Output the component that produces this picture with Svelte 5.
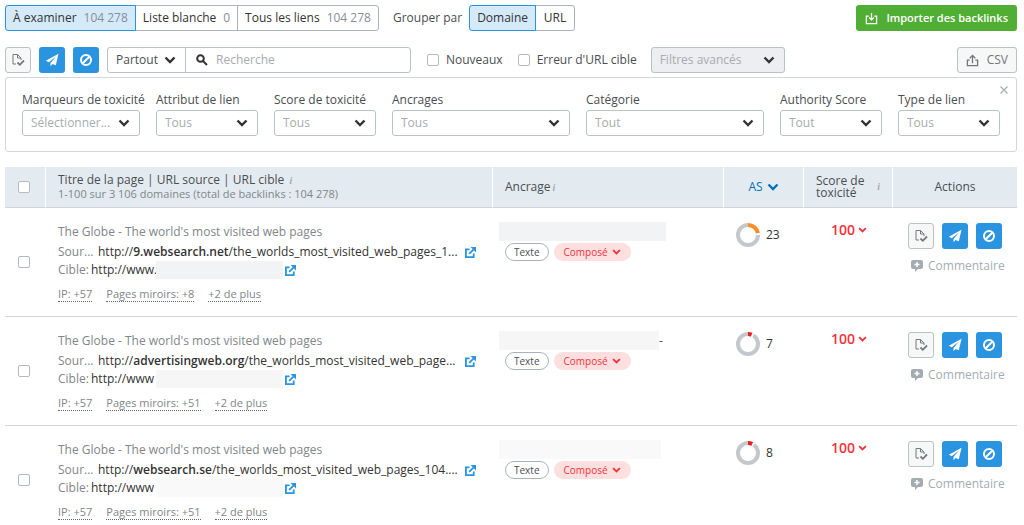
<script lang="ts">
  type Filter = { id: string; label: string; value: string };

  type Backlink = {
    id: number;
    title: string;
    domain: string;
    path: string;
    target: string;
    mirrors: number;
    authority: number;
    color: string;
    toxicity: number;
    mask: { color: string; width: number };
    rest?: string;
  };

  const filters: Filter[] = [
    { id: "markers", label: "Marqueurs de toxicité", value: "Sélectionner..." },
    { id: "attribute", label: "Attribut de lien", value: "Tous" },
    { id: "toxicity", label: "Score de toxicité", value: "Tous" },
    { id: "anchors", label: "Ancrages", value: "Tous" },
    { id: "category", label: "Catégorie", value: "Tout" },
    { id: "authority", label: "Authority Score", value: "Tout" },
    { id: "type", label: "Type de lien", value: "Tous" },
  ];

  const tabs = [
    { label: "À examiner", count: "104 278" },
    { label: "Liste blanche", count: "0" },
    { label: "Tous les liens", count: "104 278" },
  ];

  const title = "The Globe - The world's most visited web pages";

  const backlinks: Backlink[] = [
    {
      id: 1,
      title,
      domain: "9.websearch.net",
      path: "/the_worlds_most_visited_web_pages_1...",
      target: "http://www.",
      mirrors: 8,
      authority: 23,
      color: "#ff8e24",
      toxicity: 100,
      mask: { color: "#f2f3f4", width: 167 },
    },
    {
      id: 2,
      title,
      domain: "advertisingweb.org",
      path: "/the_worlds_most_visited_web_page...",
      target: "http://www",
      mirrors: 51,
      authority: 7,
      color: "#ed1c24",
      toxicity: 100,
      mask: { color: "#f6f6f6", width: 160 },
      rest: "-",
    },
    {
      id: 3,
      title,
      domain: "websearch.se",
      path: "/the_worlds_most_visited_web_pages_104....",
      target: "http://www",
      mirrors: 51,
      authority: 8,
      color: "#ed1c24",
      toxicity: 100,
      mask: { color: "#f9f9f9", width: 162 },
    },
  ];

  let activeTab = $state(0);
  let grouping = $state("Domaine");
</script>

{#snippet chevron()}
  <svg class="chevron" viewBox="0 0 12 8" aria-hidden="true">
    <path d="M1.500 1.500 6 6l4.500-4.500" />
  </svg>
{/snippet}

{#snippet external()}
  <svg class="external" viewBox="0 0 12 12" aria-hidden="true">
    <path d="M5 2.500H1v8.500h8.500V7M4.500 7.500 9.500 2.500" />
    <path class="solid" d="M6 0H12v6z" />
  </svg>
{/snippet}

{#snippet actionButtons()}
  <button class="square plain" aria-label="Liste blanche">
    <svg viewBox="0 0 14 14" aria-hidden="true">
      <path d="M5 11H2V1.500h4.500L10 5v2M6.500 1.500V5H10" />
      <path class="check" d="m6.500 9.500 2.300 2.300 4.200-4.300" />
    </svg>
  </button>
  <button class="square blue" aria-label="Supprimer">
    <svg viewBox="0 0 14 14" aria-hidden="true">
      <path class="solid" d="M13.500.8.8 7.800l3 1.500L11 3.600 5.500 10v3.300l2-2.400 3.300 1.400z" />
    </svg>
  </button>
  <button class="square blue" aria-label="Désavouer">
    <svg viewBox="0 0 14 14" aria-hidden="true">
      <circle class="thick" cx="7" cy="7" r="5" />
      <path class="thick" d="m3.700 10.300 6.600-6.600" />
    </svg>
  </button>
{/snippet}

{#snippet info()}
  <span class="info">i</span>
{/snippet}

<main class="page">
  <div class="toolbar">
    <div class="segments">
      {#each tabs as tab, i}
        <button class:active={activeTab === i} onclick={() => (activeTab = i)}>
          {tab.label} <span class="count">{tab.count}</span>
        </button>
      {/each}
    </div>
    <span class="group-label">Grouper par</span>
    <div class="segments">
      {#each ["Domaine", "URL"] as name}
        <button class:active={grouping === name} onclick={() => (grouping = name)}>
          {name}
        </button>
      {/each}
    </div>
    <button class="import">
      <svg viewBox="0 0 14 14" aria-hidden="true">
        <path d="M4 4.500H1.500v8h11v-8H10M7 1v7" />
        <path d="M4.500 6 7 8.500 9.500 6" />
      </svg>
      Importer des backlinks
    </button>
  </div>

  <div class="toolbar second">
    <div class="actions">{@render actionButtons()}</div>
    <div class="search">
      <div class="select scope">
        <select aria-label="Portée"><option>Partout</option></select>
        {@render chevron()}
      </div>
      <label class="query">
        <svg viewBox="0 0 12 12" aria-hidden="true">
          <circle cx="4.500" cy="4.500" r="3.300" />
          <path d="m7 7 4 4" />
        </svg>
        <input type="text" placeholder="Recherche" aria-label="Recherche" />
      </label>
    </div>
    <div class="checks">
      <label><input type="checkbox" />Nouveaux</label>
      <label><input type="checkbox" />Erreur d'URL cible</label>
    </div>
    <div class="select advanced">
      <select aria-label="Filtres avancés"><option>Filtres avancés</option></select>
      {@render chevron()}
    </div>
    <button class="csv">
      <svg viewBox="0 0 14 14" aria-hidden="true">
        <path d="M4 6.500H1.500v6h11v-6H10M7 10V2" />
        <path d="M4 4.500 7 1.500l3 3" />
      </svg>
      CSV
    </button>
  </div>

  <section class="filters">
    {#each filters as filter (filter.id)}
      <div class="field">
        <label for={filter.id}>{filter.label}</label>
        <div class="select">
          <select id={filter.id}><option>{filter.value}</option></select>
          {@render chevron()}
        </div>
      </div>
    {/each}
    <button class="close" aria-label="Fermer">
      <svg viewBox="0 0 8 8" aria-hidden="true"><path d="m.5.5 7 7m0-7-7 7" /></svg>
    </button>
  </section>

  <table>
    <colgroup>
      <col class="col-check" />
      <col class="col-title" />
      <col />
      <col class="col-as" />
      <col class="col-score" />
      <col class="col-actions" />
    </colgroup>
    <thead>
      <tr>
        <th class="pick"><input type="checkbox" aria-label="Tout sélectionner" /></th>
        <th>
          <div>Titre de la page | URL source | URL cible {@render info()}</div>
          <div class="summary">1-100 sur 3 106 domaines (total de backlinks : 104 278)</div>
        </th>
        <th>Ancrage{@render info()}</th>
        <th class="center"><button class="sort">AS {@render chevron()}</button></th>
        <th><div class="score-head"><span>Score de toxicité</span>{@render info()}</div></th>
        <th class="center">Actions</th>
      </tr>
    </thead>
    <tbody>
      {#each backlinks as link (link.id)}
        <tr>
          <td class="pick"><input type="checkbox" aria-label={link.domain} /></td>
          <td class="page-cell">
            <div class="title">{link.title}</div>
            <div class="line">
              <span class="key">Sour...</span>
              <a class="url source" href="#source">http://<b>{link.domain}</b>{link.path}</a>
              {@render external()}
            </div>
            <div class="line">
              <span class="key short">Cible:</span>
              <a class="url target" href="#target">{link.target}</a>
              <span class="mask" style:background={link.mask.color}></span>
              {@render external()}
            </div>
            <div class="more">
              <a href="#ip">IP: +57</a>
              <a href="#mirrors">Pages miroirs: +{link.mirrors}</a>
              <a href="#more">+2 de plus</a>
            </div>
          </td>
          <td class="anchor-cell">
            <div class="anchor">
              <span style:background={link.mask.color} style:width="{link.mask.width}px"></span>{link.rest ?? ""}
            </div>
            <div class="pills">
              <span class="pill">Texte</span>
              <button class="pill compound">Composé {@render chevron()}</button>
            </div>
          </td>
          <td class="as-cell">
            <div class="authority">
              <svg viewBox="0 0 24 24" aria-hidden="true">
                <circle cx="12" cy="12" r="10" />
                <circle class="gap" cx="12" cy="12" r="10" pathLength="100" stroke-dasharray="{link.authority + 4} 100" stroke-dashoffset="2" />
                <circle cx="12" cy="12" r="10" pathLength="100" style:stroke={link.color} stroke-dasharray="{link.authority - 1} 100" />
              </svg>
              {link.authority}
            </div>
          </td>
          <td class="score-cell">
            <button class="score">{link.toxicity} {@render chevron()}</button>
          </td>
          <td class="actions-cell">
            <div class="actions">{@render actionButtons()}</div>
            <button class="comment">
              <svg viewBox="0 0 12 12" aria-hidden="true">
                <path d="M2 0h8q2 0 2 2v5q0 2-2 2H7l-3 3V9H2Q0 9 0 7V2q0-2 2-2z" />
                <path class="plus" d="M6 2v5M3.500 4.500h5" />
              </svg>
              Commentaire
            </button>
          </td>
        </tr>
      {/each}
    </tbody>
  </table>
</main>

<style>
  :global(body) {
    background: #fff;
  }

  .page {
    box-sizing: border-box;
    padding: 5px 7px 0 5px;
    color: #4a4e52;
    font: 12px/16px "Open Sans", "Noto Sans", sans-serif;
  }

  .page :global(*) {
    box-sizing: border-box;
  }

  button,
  input,
  select {
    margin: 0;
    color: inherit;
    font: inherit;
  }

  button {
    display: inline-flex;
    align-items: center;
    justify-content: center;
    padding: 0;
    border: 0;
    background: none;
    white-space: nowrap;
    cursor: pointer;
  }

  svg {
    flex: none;
    fill: none;
    stroke: currentColor;
  }

  .solid {
    fill: currentColor;
    stroke: none;
  }

  .chevron {
    width: 12px;
    height: 8px;
    stroke-width: 2.4;
  }

  .toolbar {
    display: flex;
    align-items: center;
    height: 26px;
  }

  .second {
    margin-top: 16px;
  }

  .segments {
    display: flex;
  }

  .segments button {
    gap: 7px;
    min-width: 40px;
    height: 26px;
    margin-left: -1px;
    padding: 0 7px;
    border: 1px solid #a9b3b8;
    color: #333;
  }

  .segments button:first-child {
    margin-left: 0;
    border-radius: 3px 0 0 3px;
  }

  .segments button:last-child {
    border-radius: 0 3px 3px 0;
  }

  .segments button.active {
    z-index: 1;
    border-color: #2b94e1;
    background: #d4eaf9;
  }

  .count {
    color: #898d9a;
  }

  .group-label {
    margin: 0 7px 0 14px;
  }

  .import {
    gap: 8px;
    height: 26px;
    margin-left: auto;
    padding: 0 9px;
    border-radius: 3px;
    background: #4fae33;
    color: #fff;
    font-size: 11px;
    font-weight: 600;
  }

  .import svg,
  .csv svg {
    width: 13px;
    height: 13px;
    stroke-width: 1.4;
  }

  .csv {
    gap: 8px;
    height: 26px;
    margin-left: auto;
    padding: 0 8px;
    border: 1px solid #b9c2c5;
    border-radius: 3px;
    background: #f6f7f7;
    color: #70767a;
  }

  .actions {
    display: flex;
    gap: 8px;
  }

  .square {
    width: 26px;
    height: 26px;
    border-radius: 3px;
  }

  .square svg {
    width: 14px;
    height: 14px;
  }

  .plain {
    border: 1px solid #b9c2c5;
    background: #f6f7f7;
    color: #757a7d;
  }

  .blue {
    background: #2b94e1;
    color: #fff;
  }

  .check {
    stroke-width: 1.8;
  }

  .thick {
    stroke-width: 2;
  }

  .search {
    display: flex;
    width: 304px;
    height: 26px;
    margin-left: 8px;
    border: 1px solid #b9c2c5;
    border-radius: 3px;
  }

  .select {
    display: grid;
    align-items: center;
    height: 26px;
    border: 1px solid #b9c2c5;
    border-radius: 3px;
    background: #fff;
    color: #a6acb0;
  }

  .select select,
  .select .chevron {
    grid-area: 1 / 1;
  }

  .select select {
    width: 100%;
    min-width: 0;
    height: 24px;
    padding: 0 24px 0 8px;
    border: 0;
    background: none;
    appearance: none;
    text-overflow: ellipsis;
  }

  .select .chevron {
    justify-self: end;
    margin-right: 9px;
    color: #333;
    pointer-events: none;
  }

  .select.scope {
    width: 78px;
    height: 24px;
    border: 0;
    border-right: 1px solid #b9c2c5;
    border-radius: 0;
    background: none;
    color: #4a4e52;
  }

  .query {
    display: flex;
    flex: 1;
    align-items: center;
    gap: 8px;
    padding-left: 10px;
    color: #333;
  }

  .query svg {
    width: 12px;
    height: 12px;
    stroke-width: 2;
  }

  .query input {
    flex: 1;
    min-width: 0;
    padding: 0;
    border: 0;
    outline: 0;
    background: none;
  }

  .query input::placeholder {
    color: #a6acb0;
  }

  .checks {
    display: flex;
    gap: 15px;
    margin: 0 14px 0 16px;
  }

  .checks label {
    display: flex;
    align-items: center;
    gap: 7px;
    white-space: nowrap;
  }

  input[type="checkbox"] {
    display: block;
    flex: none;
    width: 12px;
    height: 12px;
    border: 1px solid #b4babd;
    border-radius: 2px;
    background: #fff;
    appearance: none;
  }

  input[type="checkbox"]:checked {
    border-color: #2b94e1;
    background: #2b94e1;
  }

  .select.advanced {
    width: 134px;
    background: #eceef1;
  }

  .filters {
    position: relative;
    display: grid;
    grid-template-columns: 118px 102px 102px 1fr 1fr 102px 102px;
    gap: 16px;
    margin-top: 4px;
    padding: 14px 16px 15px;
    border: 1px solid #d3d6d8;
    border-radius: 3px;
  }

  .field label {
    display: block;
    margin-bottom: 2px;
    white-space: nowrap;
  }

  .close {
    position: absolute;
    top: 8px;
    right: 8px;
    color: #a6b0b3;
  }

  .close svg {
    width: 8px;
    height: 8px;
    stroke-width: 1.3;
  }

  table {
    width: 100%;
    margin-top: 15px;
    border-collapse: separate;
    border-spacing: 0;
    table-layout: fixed;
  }

  .col-check {
    width: 41px;
  }

  .col-title {
    width: 447px;
  }

  .col-as {
    width: 80px;
  }

  .col-score {
    width: 89px;
  }

  .col-actions {
    width: 124px;
  }

  th {
    height: 41px;
    padding: 0 12px;
    border-right: 1px solid #fff;
    border-bottom: 1px solid #cfd5d8;
    background: #e3ebf0;
    font-weight: 400;
    line-height: 14px;
    text-align: left;
  }

  th:last-child {
    border-right: 0;
  }

  .pick {
    padding: 0 0 0 13px;
    vertical-align: middle;
  }

  th.center {
    padding: 0;
    text-align: center;
  }

  .summary {
    color: #81868a;
    font-size: 11px;
  }

  .info {
    margin-left: 2px;
    color: #a6acb0;
    font: italic bold 10px/12px "Liberation Serif", serif;
  }

  .sort {
    gap: 4px;
    color: #0071bc;
  }

  .score-head {
    display: flex;
    align-items: center;
    justify-content: space-between;
    line-height: 12px;
  }

  .score-head span:first-child {
    width: 50px;
  }

  td {
    height: 109px;
    padding: 0;
    border-bottom: 1px solid #d3d6d8;
    vertical-align: top;
  }

  td.pick {
    vertical-align: middle;
  }

  .page-cell {
    padding: 16px 12px 0;
    color: #81868a;
  }

  .line {
    display: flex;
    align-items: center;
    height: 18px;
    white-space: nowrap;
  }

  .title {
    margin-bottom: 3px;
  }

  .key {
    width: 40px;
  }

  .key.short {
    width: 33px;
  }

  .url {
    color: #333;
    text-decoration: none;
  }

  .url b {
    font-weight: 600;
  }

  .source {
    width: 367px;
  }

  .target {
    width: 65px;
  }

  .mask {
    width: 127px;
    height: 18px;
    margin-right: 2px;
  }

  .external {
    width: 11px;
    height: 11px;
    color: #2b94e1;
    stroke-width: 2;
  }

  .more {
    display: flex;
    gap: 14px;
    margin-top: 8px;
    font-size: 11px;
    line-height: 14px;
  }

  .more a {
    border-bottom: 1px dotted #666;
    color: #81868a;
    text-decoration: none;
  }

  .anchor-cell {
    padding: 14px 6px 0;
  }

  .anchor {
    display: flex;
    align-items: center;
    height: 19px;
  }

  .anchor span {
    height: 19px;
  }

  .pills {
    display: flex;
    gap: 5px;
    margin: 2px 0 0 6px;
  }

  .pill {
    height: 18px;
    padding: 0 8px;
    border: 1px solid #a9b3b8;
    border-radius: 9px;
    font-size: 10px;
    line-height: 16px;
  }

  .compound {
    gap: 4px;
    padding: 0 10px;
    border: 0;
    background: #fddfdf;
    color: #f5313a;
  }

  .compound .chevron,
  .score .chevron {
    width: 9px;
    height: 6px;
  }

  .as-cell {
    padding: 15px 0 0 12px;
  }

  .authority {
    display: flex;
    align-items: center;
    gap: 6px;
    color: #333;
  }

  .authority svg {
    width: 24px;
    height: 24px;
    stroke: #c4c7cc;
    stroke-width: 4;
    transform: rotate(-90deg);
  }

  .authority .gap {
    stroke: #fff;
  }

  .score-cell {
    padding: 14px 0 0 27px;
  }

  .score {
    gap: 3px;
    color: #f5313a;
    font-size: 14px;
    font-weight: 600;
  }

  .actions-cell {
    padding: 15px 0 0 15px;
  }

  .comment {
    gap: 5px;
    margin: 9px 0 0 3px;
    color: #a3adb1;
  }

  .comment svg {
    width: 12px;
    height: 12px;
    fill: currentColor;
    stroke: none;
  }

  .comment .plus {
    stroke: #fff;
    stroke-width: 1.5;
  }
</style>
